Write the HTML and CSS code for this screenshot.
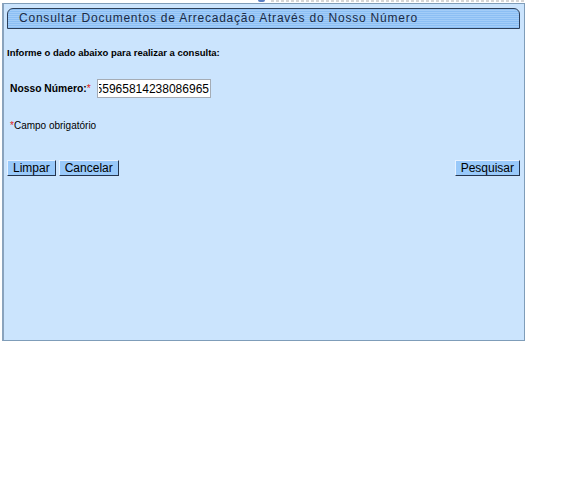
FILE: index.html
```html
<!DOCTYPE html>
<html>
<head>
<meta charset="utf-8">
<link rel="stylesheet" href="styles.css">
</head>
<body>
<div class="crumbs"><span class="crumb-dot"></span><span class="crumb-line"></span></div>
<div class="panel">
  <div class="titlebar">Consultar Documentos de Arrecadação Através do Nosso Número</div>
  <p class="intro">Informe o dado abaixo para realizar a consulta:</p>
  <div class="field">
    <label class="label">Nosso Número:<span class="req">*</span></label>
    <input class="input" type="text" value="1255965814238086965">
  </div>
  <p class="note"><span class="req">*</span>Campo obrigatório</p>
  <div class="actions">
    <div class="left">
      <button class="btn">Limpar</button>
      <button class="btn">Cancelar</button>
    </div>
    <button class="btn">Pesquisar</button>
  </div>
</div>
</body>
</html>
```

FILE: styles.css
```css
html, body {
  margin: 0;
  padding: 0;
  background: #ffffff;
  font-family: "Liberation Sans", Arial, sans-serif;
  color: #000;
}
.crumbs {
  height: 3px;
  width: 525px;
  display: flex;
  align-items: flex-start;
  gap: 6px;
  padding-left: 258px;
  box-sizing: border-box;
}
.crumb-dot {
  width: 7px;
  height: 2px;
  background: #5b7fc4;
  border-radius: 0 0 4px 4px;
}
.crumb-line {
  flex: 1;
  height: 2px;
  background: repeating-linear-gradient(90deg, #c4c4c4 0 3px, transparent 3px 5px);
  opacity: 0.7;
}
.panel {
  margin-left: 2px;
  width: 523px;
  height: 338px;
  background: #cbe4fd;
  border: 1px solid #7f9db9;
  border-left: 2px solid #8aa3bd;
  box-sizing: border-box;
  padding: 4px 4px 0 3px;
}
.titlebar {
  height: 21px;
  box-sizing: border-box;
  border: 1px solid #2c3e58;
  border-top-left-radius: 6px;
  border-top-right-radius: 6px;
  background: repeating-linear-gradient(#8cbff4 0px, #8cbff4 1px, #a3cdf8 1px, #a3cdf8 2px);
  font-size: 12px;
  letter-spacing: 0.78px;
  color: #1a2a44;
  padding-left: 11px;
  line-height: 19px;
  white-space: nowrap;
}
.intro {
  margin: 17px 0 0 0;
  font-size: 9.5px;
  font-weight: bold;
  line-height: 13px;
}
.field {
  display: flex;
  align-items: center;
  margin-top: 20px;
  padding-left: 3px;
}
.label {
  font-size: 10.3px;
  font-weight: bold;
  white-space: nowrap;
  width: 87px;
  flex: none;
}
.req {
  color: #e02020;
  font-weight: normal;
}
.input {
  width: 114px;
  height: 19px;
  box-sizing: border-box;
  border: 1px solid #a5acb5;
  background: #fff;
  font-family: "Liberation Sans", Arial, sans-serif;
  font-size: 12px;
  padding: 0 1px;
  direction: rtl;
  text-align: left;
}
.note {
  margin: 21px 0 0 0;
  padding-left: 3px;
  font-size: 10px;
  line-height: 14px;
}
.actions {
  display: flex;
  justify-content: space-between;
  margin-top: 27px;
}
.left {
  display: flex;
  gap: 3px;
}
.btn {
  font-family: "Liberation Sans", Arial, sans-serif;
  font-size: 12px;
  height: 16px;
  line-height: 12px;
  padding: 0 5px;
  background: #99c9fa;
  color: #000;
  border: 1px solid;
  border-color: #e6f1ff #24344d #24344d #e6f1ff;
  margin: 0;
}
```
